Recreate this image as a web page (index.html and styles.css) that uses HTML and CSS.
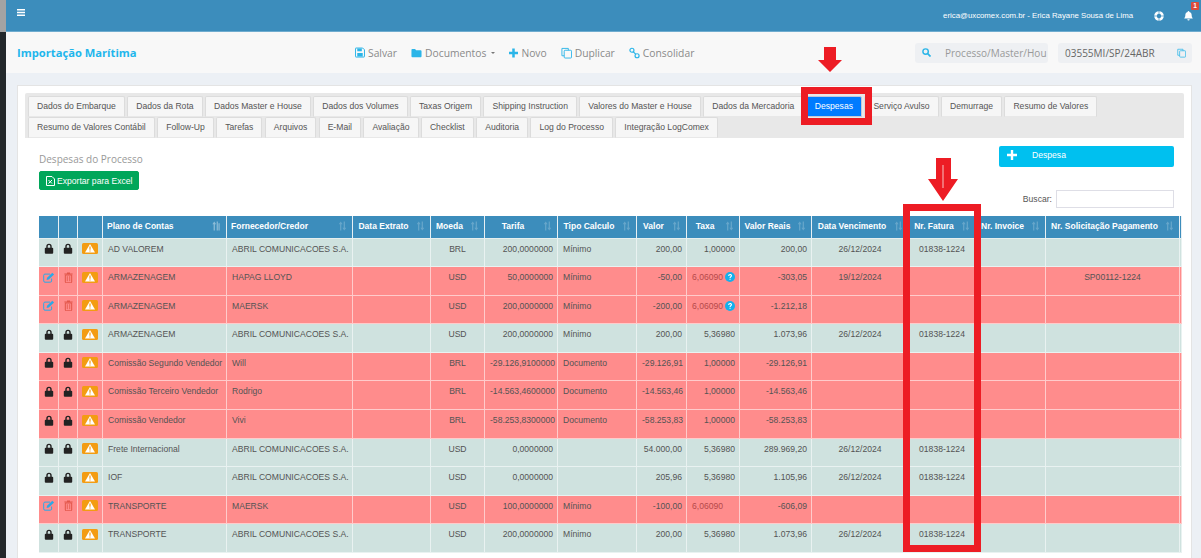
FILE: index.html
```html
<!DOCTYPE html>
<html lang="pt-BR">
<head>
<meta charset="utf-8">
<title>Importação Marítima</title>
<link rel="stylesheet" href="styles.css">
</head>
<body>
<svg class="defs" width="0" height="0" aria-hidden="true">
  <symbol id="lock" viewBox="0 0 10 11"><path d="M2.300 5V3.400a2.700 2.700 0 0 1 5.400 0V5H6.300V3.400a1.300 1.300 0 0 0-2.600 0V5z" fill="#222"/><rect x="0.800" y="4.800" width="8.400" height="6" rx="1" fill="#222"/></symbol>
  <symbol id="edit" viewBox="0 0 12 11"><path d="M8.600 6.500v2.400a1.300 1.300 0 0 1-1.300 1.300H2A1.300 1.300 0 0 1 .7 8.900V3.400A1.300 1.300 0 0 1 2 2.100h5" fill="none" stroke="#2aa9e8" stroke-width="1"/><path d="M4 5.800 9.300.8l1.800 1.700-5.300 5.100-2.200.5z" fill="#2aa9e8"/></symbol>
  <symbol id="trash" viewBox="0 0 9 11"><path d="M3 1.500V.6h3v.9h2.600v1H.4v-1z" fill="#e25548"/><path d="M1.300 3h6.400v7a.8.8 0 0 1-.8.800H2.100a.8.8 0 0 1-.8-.8z" fill="none" stroke="#e25548" stroke-width="1"/><path d="M3.300 4.200v5M5.700 4.200v5" stroke="#e25548" stroke-width=".8"/></symbol>
  <symbol id="warn" viewBox="0 0 16 11"><rect width="16" height="11" rx="1.500" fill="#f39c12"/><path d="M8 1 13 9.600H3z" fill="#fff"/><path d="M7.400 3.600h1.200v3.200H7.400zM7.400 7.400h1.200v1.100H7.400z" fill="#f39c12"/></symbol>
  <symbol id="sort" viewBox="0 0 10 10"><path d="M3 0 .8 3h1.500v7h1.400V3h1.500zM7 10l2.200-3H7.700V0H6.300v7H4.800z" fill="#fff" opacity=".22"/></symbol>
  <symbol id="sort2" viewBox="0 0 10 10"><path d="M2.500 0 .4 3h1.400v7h1.400V3h1.400zM5.200 0h1.300v10H5.200zM7.200 2h1.300v8H7.200z" fill="#fff" opacity=".42"/></symbol>
  <symbol id="help" viewBox="0 0 10 10"><circle cx="5" cy="5" r="5" fill="#14b0ec"/><path d="M3.200 3.900C3.200 2.800 4 2.100 5.100 2.100c1.100 0 1.900.7 1.900 1.600 0 1.300-1.400 1.300-1.400 2.400H4.500c0-1.600 1.300-1.700 1.300-2.400 0-.4-.3-.6-.7-.6-.5 0-.8.3-.8.800zM4.500 6.700h1.100v1.100H4.500z" fill="#fff"/></symbol>
</svg>
<div class="app">
  <div class="strip"></div>
  <div class="main">
    <header class="topbar">
      <svg class="burger" viewBox="0 0 8 7" width="8" height="7"><path d="M0 0h8v1.500H0zM0 2.700h8v1.500H0zM0 5.400h8v1.500H0z" fill="#fff"/></svg>
      <div class="user">
        <span>erica@uxcomex.com.br - Erica Rayane Sousa de Lima</span>
        <svg class="ring" viewBox="0 0 10 10" width="10" height="10"><circle cx="5" cy="5" r="3.500" fill="none" stroke="#fff" stroke-width="2.600"/><path d="M3.900 0h2.200v10H3.900zM0 3.900h10v2.200H0z" fill="#3c8dbc" opacity=".35"/></svg>
        <span class="bell">
          <svg viewBox="0 0 10 11" width="9" height="10"><path d="M5 0a1 1 0 0 1 1 1c2 .4 2.500 2 2.500 3.500 0 2 .6 3 1.300 3.800H.2C.9 7.500 1.500 6.500 1.500 4.500 1.500 3 2 1.400 4 1a1 1 0 0 1 1-1zM3.700 9.200h2.600a1.300 1.300 0 0 1-2.600 0z" fill="#fff"/></svg>
          <b class="badge">1</b>
        </span>
      </div>
    </header>
    <div class="subbar">
      <h1 class="title">Importação Marítima</h1>
      <nav class="actions">
        <a><svg viewBox="0 0 11 11" width="10" height="11"><path d="M1 .6h7.500L10.400 2.500V10a.5.5 0 0 1-.5.5H1a.5.5 0 0 1-.5-.5V1A.5.5 0 0 1 1 .6z" fill="none" stroke="#2bb5e8" stroke-width="1.100"/><path d="M2.500 1h5v3h-5zM2.500 6h6v4h-6z" fill="#2bb5e8"/></svg>Salvar</a>
        <a><svg viewBox="0 0 12 10" width="11" height="10"><path d="M.5 1.500A1 1 0 0 1 1.500.5h3l1 1.500h5a1 1 0 0 1 1 1v5.500a1 1 0 0 1-1 1h-9a1 1 0 0 1-1-1z" fill="#2bb5e8"/></svg>Documentos<i class="caret"></i></a>
        <a><svg viewBox="0 0 10 10" width="9" height="10"><path d="M3.600 0h2.800v3.600H10v2.800H6.400V10H3.600V6.400H0V3.600h3.600z" fill="#2bb5e8"/></svg>Novo</a>
        <a><svg viewBox="0 0 12 12" width="11" height="12"><path d="M8 3V1H1v8h2.500" fill="none" stroke="#2bb5e8"/><rect x="3.500" y="3" width="8" height="8.500" rx="1" fill="none" stroke="#2bb5e8"/></svg>Duplicar</a>
        <a><svg viewBox="0 0 12 12" width="11" height="12"><circle cx="3.200" cy="3" r="2.200" fill="none" stroke="#2bb5e8" stroke-width="1.300"/><circle cx="8.800" cy="9" r="2.200" fill="none" stroke="#2bb5e8" stroke-width="1.300"/><path d="M4.500 4.500l3 3" stroke="#2bb5e8" stroke-width="1.300"/></svg>Consolidar</a>
      </nav>
      <div class="search">
        <svg viewBox="0 0 10 10" width="9" height="9"><circle cx="4" cy="4" r="3" fill="none" stroke="#2bb5e8" stroke-width="1.600"/><path d="M6.300 6.300 9.500 9.500" stroke="#2bb5e8" stroke-width="1.800"/></svg>
        <span>Processo/Master/Hou</span>
      </div>
      <div class="process">
        <span>03555MI/SP/24ABR</span>
        <svg viewBox="0 0 12 12" width="9" height="10"><path d="M8 3V1H1v8h2.500" fill="none" stroke="#2bb5e8"/><rect x="3.500" y="3" width="8" height="8.500" rx="1" fill="none" stroke="#2bb5e8"/></svg>
      </div>
    </div>
    <main class="content">
      <section class="panel">
        <div class="tabs">
          <a class="tab">Dados do Embarque</a><a class="tab">Dados da Rota</a><a class="tab">Dados Master e House</a><a class="tab">Dados dos Volumes</a><a class="tab">Taxas Origem</a><a class="tab">Shipping Instruction</a><a class="tab">Valores do Master e House</a><a class="tab">Dados da Mercadoria</a><a class="tab active">Despesas</a><a class="tab">Serviço Avulso</a><a class="tab">Demurrage</a><a class="tab">Resumo de Valores</a><i class="tab-break"></i><a class="tab">Resumo de Valores Contábil</a><a class="tab">Follow-Up</a><a class="tab">Tarefas</a><a class="tab">Arquivos</a><a class="tab">E-Mail</a><a class="tab">Avaliação</a><a class="tab">Checklist</a><a class="tab">Auditoria</a><a class="tab">Log do Processo</a><a class="tab">Integração LogComex</a>
        </div>
        <div class="tools">
          <div class="tools-left">
            <h2 class="subtitle">Despesas do Processo</h2>
            <button class="export"><svg viewBox="0 0 9 10" width="9" height="10"><path d="M.5.500h5.500l2.500 2.500v6.500H.5z" fill="none" stroke="#fff"/><path d="M2.500 4l3.500 3.500M6 4 2.500 7.500" stroke="#fff"/></svg>Exportar para Excel</button>
          </div>
          <div class="tools-right">
            <button class="add"><svg viewBox="0 0 10 10" width="10" height="10"><path d="M3.800 0h2.400v3.800H10v2.400H6.200V10H3.800V6.200H0V3.800h3.800z" fill="#fff"/></svg>Despesa</button>
            <label class="find">Buscar:<input class="find-input" type="text"></label>
          </div>
        </div>
        <div class="table-wrap">
          <table class="grid">
            <colgroup>
              <col class="w20"><col class="w19"><col class="w25"><col class="w124"><col class="w126"><col class="w78"><col class="w54"><col class="w73"><col class="w79"><col class="w50"><col class="w53"><col class="w72"><col class="w97"><col class="w67"><col class="w70"><col class="w134"><col class="w2">
            </colgroup>
            <thead>
              <tr>
                <th></th><th></th><th></th>
                <th class="left">Plano de Contas<svg class="si"><use href="#sort2"/></svg></th>
                <th class="left">Fornecedor/Credor<svg class="si"><use href="#sort"/></svg></th>
                <th>Data Extrato<svg class="si"><use href="#sort"/></svg></th>
                <th>Moeda<svg class="si"><use href="#sort"/></svg></th>
                <th>Tarifa<svg class="si"><use href="#sort"/></svg></th>
                <th>Tipo Calculo<svg class="si"><use href="#sort"/></svg></th>
                <th>Valor<svg class="si"><use href="#sort"/></svg></th>
                <th>Taxa<svg class="si"><use href="#sort"/></svg></th>
                <th>Valor Reais<svg class="si"><use href="#sort"/></svg></th>
                <th>Data Vencimento<svg class="si"><use href="#sort"/></svg></th>
                <th>Nr. Fatura<svg class="si"><use href="#sort"/></svg></th>
                <th>Nr. Invoice<svg class="si"><use href="#sort"/></svg></th>
                <th>Nr. Solicitação Pagamento<svg class="si"><use href="#sort"/></svg></th>
                <th></th>
              </tr>
            </thead>
            <tbody>
              <tr class="ok"><td class="ic"><svg class="lk"><use href="#lock"/></svg></td><td class="ic"><svg class="lk"><use href="#lock"/></svg></td><td class="ic"><svg class="wn"><use href="#warn"/></svg></td><td>AD VALOREM</td><td>ABRIL COMUNICACOES S.A.</td><td></td><td class="c">BRL</td><td class="r">200,0000000</td><td>Mínimo</td><td class="r">200,00</td><td class="r">1,00000</td><td class="r">200,00</td><td class="c">26/12/2024</td><td class="c">01838-1224</td><td></td><td></td><td></td></tr>
              <tr class="bad"><td class="ic"><svg class="ed"><use href="#edit"/></svg></td><td class="ic"><svg class="tr"><use href="#trash"/></svg></td><td class="ic"><svg class="wn"><use href="#warn"/></svg></td><td>ARMAZENAGEM</td><td>HAPAG LLOYD</td><td></td><td class="c">USD</td><td class="r">50,0000000</td><td>Mínimo</td><td class="r">-50,00</td><td class="r"><span class="rate">6,06090</span><svg class="hp"><use href="#help"/></svg></td><td class="r">-303,05</td><td class="c">19/12/2024</td><td></td><td></td><td class="c">SP00112-1224</td><td></td></tr>
              <tr class="bad"><td class="ic"><svg class="ed"><use href="#edit"/></svg></td><td class="ic"><svg class="tr"><use href="#trash"/></svg></td><td class="ic"><svg class="wn"><use href="#warn"/></svg></td><td>ARMAZENAGEM</td><td>MAERSK</td><td></td><td class="c">USD</td><td class="r">200,0000000</td><td>Mínimo</td><td class="r">-200,00</td><td class="r"><span class="rate">6,06090</span><svg class="hp"><use href="#help"/></svg></td><td class="r">-1.212,18</td><td></td><td></td><td></td><td></td><td></td></tr>
              <tr class="ok"><td class="ic"><svg class="lk"><use href="#lock"/></svg></td><td class="ic"><svg class="lk"><use href="#lock"/></svg></td><td class="ic"><svg class="wn"><use href="#warn"/></svg></td><td>ARMAZENAGEM</td><td>ABRIL COMUNICACOES S.A.</td><td></td><td class="c">USD</td><td class="r">200,0000000</td><td>Mínimo</td><td class="r">200,00</td><td class="r">5,36980</td><td class="r">1.073,96</td><td class="c">26/12/2024</td><td class="c">01838-1224</td><td></td><td></td><td></td></tr>
              <tr class="bad"><td class="ic"><svg class="lk"><use href="#lock"/></svg></td><td class="ic"><svg class="lk"><use href="#lock"/></svg></td><td class="ic"><svg class="wn"><use href="#warn"/></svg></td><td>Comissão Segundo Vendedor</td><td>Will</td><td></td><td class="c">BRL</td><td class="r">-29.126,9100000</td><td>Documento</td><td class="r">-29.126,91</td><td class="r">1,00000</td><td class="r">-29.126,91</td><td></td><td></td><td></td><td></td><td></td></tr>
              <tr class="bad"><td class="ic"><svg class="lk"><use href="#lock"/></svg></td><td class="ic"><svg class="lk"><use href="#lock"/></svg></td><td class="ic"><svg class="wn"><use href="#warn"/></svg></td><td>Comissão Terceiro Vendedor</td><td>Rodrigo</td><td></td><td class="c">BRL</td><td class="r">-14.563,4600000</td><td>Documento</td><td class="r">-14.563,46</td><td class="r">1,00000</td><td class="r">-14.563,46</td><td></td><td></td><td></td><td></td><td></td></tr>
              <tr class="bad"><td class="ic"><svg class="lk"><use href="#lock"/></svg></td><td class="ic"><svg class="lk"><use href="#lock"/></svg></td><td class="ic"><svg class="wn"><use href="#warn"/></svg></td><td>Comissão Vendedor</td><td>Vivi</td><td></td><td class="c">BRL</td><td class="r">-58.253,8300000</td><td>Documento</td><td class="r">-58.253,83</td><td class="r">1,00000</td><td class="r">-58.253,83</td><td></td><td></td><td></td><td></td><td></td></tr>
              <tr class="ok"><td class="ic"><svg class="lk"><use href="#lock"/></svg></td><td class="ic"><svg class="lk"><use href="#lock"/></svg></td><td class="ic"><svg class="wn"><use href="#warn"/></svg></td><td>Frete Internacional</td><td>ABRIL COMUNICACOES S.A.</td><td></td><td class="c">USD</td><td class="r">0,0000000</td><td></td><td class="r">54.000,00</td><td class="r">5,36980</td><td class="r">289.969,20</td><td class="c">26/12/2024</td><td class="c">01838-1224</td><td></td><td></td><td></td></tr>
              <tr class="ok"><td class="ic"><svg class="lk"><use href="#lock"/></svg></td><td class="ic"><svg class="lk"><use href="#lock"/></svg></td><td class="ic"><svg class="wn"><use href="#warn"/></svg></td><td>IOF</td><td>ABRIL COMUNICACOES S.A.</td><td></td><td class="c">USD</td><td class="r">0,0000000</td><td></td><td class="r">205,96</td><td class="r">5,36980</td><td class="r">1.105,96</td><td class="c">26/12/2024</td><td class="c">01838-1224</td><td></td><td></td><td></td></tr>
              <tr class="bad"><td class="ic"><svg class="ed"><use href="#edit"/></svg></td><td class="ic"><svg class="tr"><use href="#trash"/></svg></td><td class="ic"><svg class="wn"><use href="#warn"/></svg></td><td>TRANSPORTE</td><td>MAERSK</td><td></td><td class="c">USD</td><td class="r">100,0000000</td><td>Mínimo</td><td class="r">-100,00</td><td class="r"><span class="rate nohelp">6,06090</span></td><td class="r">-606,09</td><td></td><td></td><td></td><td></td><td></td></tr>
              <tr class="ok"><td class="ic"><svg class="lk"><use href="#lock"/></svg></td><td class="ic"><svg class="lk"><use href="#lock"/></svg></td><td class="ic"><svg class="wn"><use href="#warn"/></svg></td><td>TRANSPORTE</td><td>ABRIL COMUNICACOES S.A.</td><td></td><td class="c">USD</td><td class="r">200,0000000</td><td>Mínimo</td><td class="r">200,00</td><td class="r">5,36980</td><td class="r">1.073,96</td><td class="c">26/12/2024</td><td class="c">01838-1224</td><td></td><td></td><td></td></tr>
            </tbody>
          </table>
        </div>
      </section>
    </main>
  </div>
</div>
<div class="mark box-tab"></div>
<div class="mark box-col"></div>
<svg class="mark arrow-tab" viewBox="0 0 24 25"><path d="M6 0h12v13h6L12 25 0 13h6z" fill="#ed1c24"/></svg>
<svg class="mark arrow-col" viewBox="0 0 30 43"><path d="M8 0h15v21h7L15 43 0 21h8z" fill="#ed1c24"/><path d="M15 7v23" stroke="#f7c4c4" stroke-width="1"/></svg>
</body>
</html>
```
FILE: styles.css
```css
* { box-sizing: border-box; }
html, body { margin: 0; height: 558px; overflow: hidden; }
body { font-family: "Liberation Sans", Arial, sans-serif; background: #fff; color: #555; position: relative; }
.defs { position: absolute; }
.app { display: flex; height: 558px; }
.strip { width: 6px; flex: none; background: linear-gradient(#a3a3a3 0, #a3a3a3 32px, #23282b 32px); }
.main { flex: 1; min-width: 0; display: flex; flex-direction: column; background: #ecf0f5; }

.topbar { height: 32px; flex: none; background: #3c8dbc; border-bottom: 1px solid #6faccf; display: flex; align-items: center; justify-content: space-between; padding: 0 8px 0 11px; color: #fff; }
.burger { display: block; margin-bottom: 6px; }
.user { display: flex; align-items: center; font-size: 7.800px; }
.ring { margin-left: 21px; }
.bell { position: relative; display: block; height: 10px; margin-left: 20px; }
.bell svg { display: block; }
.badge { position: absolute; left: 7px; top: -9px; width: 8px; height: 8px; background: #dd4b39; border-radius: 1px; font-size: 6.500px; line-height: 8px; text-align: center; color: #fff; }

.subbar { height: 41px; flex: none; background: #f8f8f8; display: flex; align-items: center; padding: 0 8px 0 11px; font-family: "Open Sans", sans-serif; }
.title { width: 338px; flex: none; margin: 0; font-size: 11.200px; font-weight: 700; color: #1fb6ec; }
.actions { width: 560px; flex: none; display: flex; gap: 14px; font-size: 10.300px; color: #8a8a8a; }
.actions a { display: flex; align-items: center; gap: 3px; }
.caret { width: 0; height: 0; margin-left: 2px; border: 2.500px solid transparent; border-top-color: #777; border-bottom: 0; }
.search { width: 133px; height: 20px; flex: none; background: #eef0f3; border-radius: 3px; display: flex; align-items: center; padding-left: 7px; gap: 14px; font-size: 10px; color: #999; overflow: hidden; white-space: nowrap; }
.search svg { flex: none; }
.process { width: 134px; height: 20px; flex: none; margin-left: 10px; background: #eef0f3; border-radius: 3px; display: flex; align-items: center; justify-content: space-between; padding: 0 6px 0 7px; font-size: 10px; color: #666; }

.content { flex: 1; min-height: 0; padding: 12px 9px 0 11px; }
.panel { height: 100%; background: #fff; border: 1px solid #e4e4e4; border-bottom: 0; padding: 7px 7px 0 7px; }

.tabs { display: flex; flex-wrap: wrap; align-content: flex-start; height: 45px; background: #e8e8e8; padding: 3px 2px 0 3px; border-radius: 2px 2px 0 0; column-gap: 2.400px; }
.tab { height: 21px; padding: 0 8px; background: #f6f6f6; border: 1px solid #dcdcdc; border-bottom-color: #e8e8e8; border-radius: 2px 2px 0 0; font-size: 8.600px; line-height: 19px; color: #555; white-space: nowrap; }
.tab.active { background: #007bff; border-color: #c7c7d6; color: #fff; }
.tab-break { flex-basis: 100%; height: 0; }

.tools { height: 70px; margin-top: 8px; padding: 0 10px 0 14px; display: flex; justify-content: space-between; }
.subtitle { margin: 6px 0 0; font-family: "Open Sans", sans-serif; font-size: 10px; font-weight: 400; line-height: 14px; color: #999; }
.export { display: flex; align-items: center; gap: 2px; width: 100px; height: 19px; margin-top: 5px; padding: 0 0 0 6px; border: 1px solid #00a65a; border-radius: 2px; background: #00a65a; color: #fff; font: 8.600px "Liberation Sans", Arial, sans-serif; white-space: nowrap; }
.tools-right { width: 175px; }
.add { display: flex; align-items: center; gap: 15px; width: 100%; height: 21px; padding: 0 0 3px 8px; border: 0; border-radius: 2px; background: #00c0ef; color: #fff; font: 8.600px "Liberation Sans", Arial, sans-serif; }
.find { display: flex; align-items: center; justify-content: flex-end; gap: 4px; height: 18px; margin-top: 23px; font-size: 8.600px; color: #555; }
.find-input { width: 118px; height: 18px; border: 1px solid #dedee6; background: #fff; padding: 0; }

.table-wrap { margin: 0 2px 0 14px; overflow: hidden; }
.grid { width: 1143px; table-layout: fixed; border-collapse: separate; border-spacing: 0; font-size: 8.600px; }
.w20 { width: 20px; } .w19 { width: 19px; } .w25 { width: 25px; } .w124 { width: 124px; } .w126 { width: 126px; } .w78 { width: 78px; } .w54 { width: 54px; } .w73 { width: 73px; } .w79 { width: 79px; } .w50 { width: 50px; } .w53 { width: 53px; } .w72 { width: 72px; } .w97 { width: 97px; } .w67 { width: 67px; } .w70 { width: 70px; } .w134 { width: 134px; } .w2 { width: 2px; }

th { position: relative; height: 22.500px; padding: 0 18px 1.500px 2px; background: #3c8dbc; background-clip: padding-box; border-right: 1px solid #e8f0f4; border-bottom: 1.500px solid #e6eeee; color: #fff; font-weight: 700; font-size: 8.500px; text-align: center; white-space: nowrap; overflow: hidden; }
th.left { text-align: left; padding-left: 4px; }
.si { position: absolute; right: 5px; top: 5px; width: 9px; height: 10px; }
tbody tr { height: 28.600px; }
td { padding: 4px 4px 0 5px; height: 28.600px; vertical-align: top; line-height: 12px; border-right: 1px solid rgba(255,255,255,.55); border-bottom: 1px solid rgba(255,255,255,.55); color: #545454; white-space: nowrap; overflow: hidden; }
.ok td { background: #cfe2df; }
.bad td { background: #ff8c8c; }
td.c { text-align: center; padding-left: 2px; padding-right: 2px; }
td.r { text-align: right; }
td.ic { padding: 4.500px 0 0; text-align: center; }
td.ic svg { display: block; margin: 0 auto; }
.lk { width: 10px; height: 11px; }
.ed { width: 12px; height: 11px; }
.tr { width: 9px; height: 11px; }
.wn { width: 16px; height: 11px; }
.rate { color: #b5494a; }
.rate.nohelp { margin-right: 12px; }
.hp { width: 10px; height: 10px; margin-left: 2px; vertical-align: -2px; }

.mark { position: absolute; pointer-events: none; }
.box-tab { left: 801px; top: 87px; width: 71px; height: 38px; border: 7px solid #ed1c24; }
.box-col { left: 903px; top: 204px; width: 78px; height: 348px; border: 7px solid #ed1c24; }
.arrow-tab { left: 818px; top: 47px; width: 24px; height: 25px; }
.arrow-col { left: 928px; top: 158px; width: 30px; height: 43px; }
```
